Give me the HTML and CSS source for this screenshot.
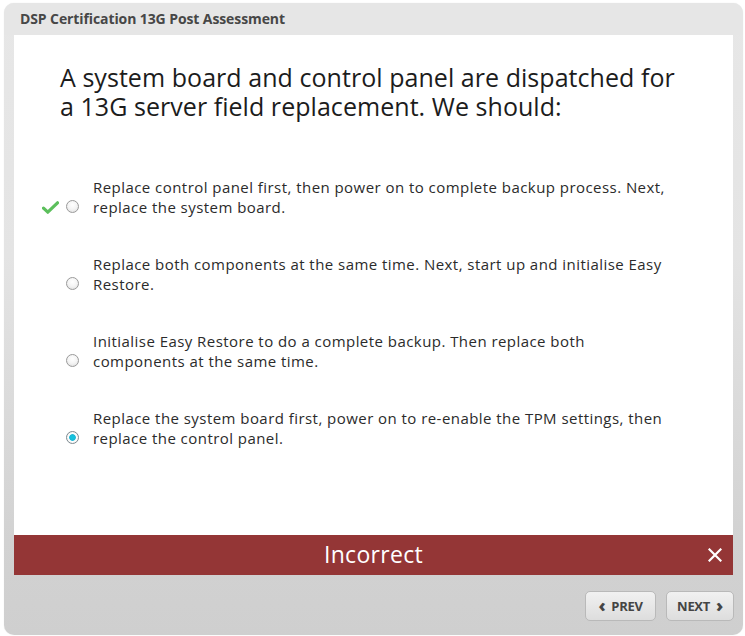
FILE: index.html
```html
<!DOCTYPE html>
<html>
<head>
<meta charset="utf-8">
<link rel="stylesheet" href="styles.css">
</head>
<body>
<div class="frame">
  <div class="header">DSP Certification 13G Post Assessment</div>
  <div class="panel">
    <h1 class="question">A system board and control panel are dispatched for a 13G server field replacement. We should:</h1>
    <ul class="options">
      <li class="option">
        <span class="mark">
          <svg width="17" height="13" viewBox="0 0 17 13"><path d="M1.5 7.2 L5.8 11.2 L15.5 1.8" fill="none" stroke="#5cbf5c" stroke-width="3.2" stroke-linecap="round" stroke-linejoin="round"/></svg>
        </span>
        <span class="radio"></span>
        <span class="label">Replace control panel first, then power on to complete backup process. Next, replace the system board.</span>
      </li>
      <li class="option">
        <span class="mark"></span>
        <span class="radio"></span>
        <span class="label">Replace both components at the same time. Next, start up and initialise Easy Restore.</span>
      </li>
      <li class="option">
        <span class="mark"></span>
        <span class="radio"></span>
        <span class="label">Initialise Easy Restore to do a complete backup. Then replace both components at the same time.</span>
      </li>
      <li class="option">
        <span class="mark"></span>
        <span class="radio checked"></span>
        <span class="label">Replace the system board first, power on to re-enable the TPM settings, then replace the control panel.</span>
      </li>
    </ul>
  </div>
  <div class="feedback">
    <span class="feedback-text">Incorrect</span>
    <svg class="close" width="14" height="14" viewBox="0 0 14 14"><path d="M1.5 1.5 L12.5 12.5 M12.5 1.5 L1.5 12.5" stroke="#fff" stroke-width="2.2" stroke-linecap="square"/></svg>
  </div>
  <div class="footer">
    <button class="btn"><span class="chev">&#x2039;</span>PREV</button>
    <button class="btn">NEXT<span class="chev">&#x203A;</span></button>
  </div>
</div>
</body>
</html>
```
FILE: styles.css
```css
html, body {
  margin: 0;
  padding: 0;
  background: #ffffff;
}
body {
  font-family: "Open Sans", "Noto Sans", "Liberation Sans", sans-serif;
  padding: 3px 2px 1px 4px;
}
.frame {
  width: 739px;
  height: 632px;
  border-radius: 10px;
  background: linear-gradient(to bottom, #e7e7e7 0%, #e4e4e4 40%, #d2d2d2 85%, #cfcfcf 100%);
  display: flex;
  flex-direction: column;
  box-shadow: 0 0 1px rgba(0,0,0,0.15);
}
.header {
  height: 32px;
  line-height: 32px;
  padding-left: 16px;
  font-size: 14px;
  font-weight: 700;
  color: #474747;
  letter-spacing: -0.1px;
  background: #e6e6e6;
  border-radius: 10px 10px 0 0;
}
.panel {
  margin: 0 10px;
  height: 500px;
  background: #ffffff;
  padding: 28px 40px 0 46px;
  box-sizing: border-box;
}
.question {
  margin: 0;
  width: 625px;
  font-size: 25px;
  font-weight: 400;
  line-height: 29px;
  color: #1c1c1c;
  letter-spacing: 0.05px;
}
.options {
  list-style: none;
  margin: 56px 0 0 0;
  padding: 0;
  display: flex;
  flex-direction: column;
  gap: 37px;
}
.option {
  display: flex;
  align-items: flex-end;
  margin-left: -18px;
}
.mark {
  width: 18px;
  height: 20px;
  display: flex;
  align-items: center;
  justify-content: flex-start;
  margin-right: 6px;
}
.radio {
  width: 11px;
  height: 11px;
  border-radius: 50%;
  border: 1px solid #9a9a9a;
  background: radial-gradient(circle at 50% 35%, #ffffff 0%, #f4f4f4 50%, #dadada 100%);
  margin-bottom: 4px;
  margin-right: 14px;
  flex: none;
  box-sizing: content-box;
}
.radio.checked {
  background: radial-gradient(circle, #10c6e0 0%, #1ab8d6 38%, #ffffff 48%, #f0f0f0 80%, #d8d8d8 100%);
  border-color: #7d8a90;
}
.label {
  font-size: 15px;
  line-height: 20px;
  color: #2b2b2b;
  letter-spacing: 0.45px;
  width: 576px;
}
.feedback {
  margin: 0 10px;
  height: 40px;
  background: #943636;
  position: relative;
  display: flex;
  align-items: center;
  justify-content: center;
}
.feedback-text {
  color: #ffffff;
  font-size: 23px;
  font-weight: 400;
  letter-spacing: 0.3px;
  margin-top: -3px;
}
.close {
  position: absolute;
  right: 11px;
  top: 13px;
}
.footer {
  flex: 1;
  display: flex;
  justify-content: flex-end;
  align-items: flex-start;
  gap: 10px;
  padding: 16px 9px 0 0;
}
.btn {
  height: 30px;
  padding: 0 10px;
  border: 1px solid #b9b9b9;
  border-radius: 5px;
  background: linear-gradient(to bottom, #f1f1f1, #dddddd);
  font-family: "Open Sans", "Noto Sans", sans-serif;
  font-size: 13px;
  font-weight: 700;
  color: #444;
  display: flex;
  align-items: center;
  gap: 6px;
  letter-spacing: -0.3px;
}
.btn:first-child { width: 71px; justify-content: center; }
.btn:last-child { width: 68px; justify-content: center; }
.chev {
  font-size: 18px;
  font-weight: 800;
  line-height: 1;
  margin-top: -3px;
}
```
